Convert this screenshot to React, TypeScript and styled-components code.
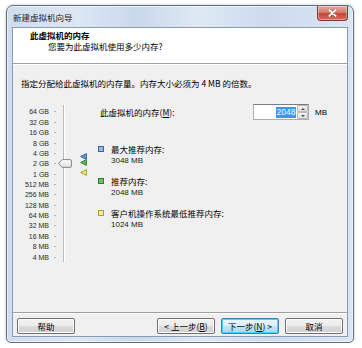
import React from "react";
import styled, { createGlobalStyle } from "styled-components";

const CJK = `"Noto Sans CJK SC", "Noto Sans", sans-serif`;
const LATIN = `"Liberation Sans", "Noto Sans CJK SC", sans-serif`;

const GlobalStyle = createGlobalStyle`
  html, body { margin: 0; padding: 0; background: #ffffff; }
  body { font-family: ${CJK}; font-size: 8.5px; color: #000; }
  * { box-sizing: border-box; }
`;

const Window = styled.div`
  position: relative;
  margin: 5px 0 0 6px;
  width: 348px;
  height: 338px;
  border: 1px solid #5e6e83;
  border-radius: 7px 7px 5px 5px;
  background: linear-gradient(
    to right,
    #cfdcec 0%,
    #dce7f4 20%,
    #c9d8ea 38%,
    #dfe9f5 55%,
    #cddbec 75%,
    #d9e5f2 100%
  );
  box-shadow: inset 0 0 0 1px rgba(255, 255, 255, 0.6), 0 0 3px rgba(0, 0, 0, 0.25);
  display: flex;
  flex-direction: column;
  padding: 0 5px 5px 5px;
`;

const TitleBar = styled.div`
  height: 21px;
  display: flex;
  align-items: center;
  padding-left: 1px;
  font-size: 8.5px;
  color: #1e1e1e;
`;

const CloseButton = styled.div`
  position: absolute;
  top: 0;
  right: 5px;
  width: 31px;
  height: 15px;
  border: 1px solid #7a3a33;
  border-top: none;
  border-radius: 0 0 4px 4px;
  background: linear-gradient(#e9a99f 0%, #d77c70 45%, #c3463a 55%, #d3715e 100%);
  box-shadow: inset 0 0 0 1px rgba(255, 255, 255, 0.35);
  display: flex;
  align-items: center;
  justify-content: center;
`;

const Client = styled.div`
  flex: 1;
  display: flex;
  flex-direction: column;
  background: #f0f0f0;
  border: 1px solid #8a9ab0;
`;

const Header = styled.div`
  height: 35px;
  background: #ffffff;
  padding: 2px 0 0 17px;
  display: flex;
  flex-direction: column;
`;

const HeaderTitle = styled.div`
  font-weight: bold;
  line-height: 11px;
  font-size: 8.5px;
`;

const HeaderSub = styled.div`
  line-height: 11px;
  padding-left: 18px;
`;

const Divider = styled.div`
  height: 2px;
  border-top: 1px solid #a0a0a0;
  border-bottom: 1px solid #ffffff;
  flex: none;
`;

const Body = styled.div`
  flex: 1;
  display: flex;
  flex-direction: column;
`;

const Sentence = styled.div`
  margin: 13px 0 0 8px;
  line-height: 11px;
`;

const Main = styled.div`
  flex: 1;
  display: flex;
  margin-top: 15px;
`;

const Slider = styled.div`
  position: relative;
  width: 85px;
  display: flex;
  padding-top: 1px;
`;

const LabelCol = styled.div`
  display: flex;
  flex-direction: column;
  margin-top: 1.8px;
`;

const ROW = 10.36;

const ScaleRow = styled.div`
  height: ${ROW}px;
  display: flex;
  align-items: center;
`;

const ScaleText = styled.span`
  width: 36px;
  text-align: right;
  font-family: ${LATIN};
  font-size: 7px;
  color: #2a2a2a;
  white-space: nowrap;
`;

const Tick = styled.span`
  width: 2px;
  height: 1px;
  margin-left: 5px;
  background: #b4b4b4;
`;

const Track = styled.div`
  width: 2px;
  height: 157px;
  margin-left: 7px;
  border-left: 1px solid #bcbcbc;
  border-right: 1px solid #ffffff;
`;

const Thumb = styled.svg`
  position: absolute;
  left: 45px;
`;

const Marker = styled.svg`
  position: absolute;
  left: 67px;
`;

const Right = styled.div`
  flex: 1;
  display: flex;
  flex-direction: column;
`;

const MemRow = styled.div`
  display: flex;
  align-items: center;
  height: 16px;
  padding-left: 2px;
`;

const MemLabel = styled.span`
  width: 153px;
  line-height: 11px;
`;

const U = styled.span`
  text-decoration: underline;
`;

const SpinBox = styled.div`
  width: 56px;
  height: 16px;
  display: flex;
  border: 1px solid #abadb3;
  border-top-color: #7a7c83;
  background: #ffffff;
`;

const SpinInput = styled.div`
  flex: 1;
  display: flex;
  align-items: center;
  justify-content: flex-end;
  padding-right: 1px;
`;

const Selected = styled.span`
  background: #3399ff;
  color: #ffffff;
  font-family: ${LATIN};
  font-size: 8.5px;
  line-height: 11px;
  padding: 0 0.5px;
`;

const SpinButtons = styled.div`
  width: 11px;
  display: flex;
  flex-direction: column;
`;

const SpinBtn = styled.div`
  flex: 1;
  display: flex;
  align-items: center;
  justify-content: center;
  background: linear-gradient(#f3f3f3, #dedede);
  border: 1px solid #b8b8b8;
  border-radius: 1px;
`;

const Unit = styled.span`
  margin-left: 6px;
  font-family: ${LATIN};
  font-size: 8px;
`;

const Legend = styled.div`
  margin-top: 23.5px;
  display: flex;
  flex-direction: column;
  gap: 10px;
`;

const LegendItem = styled.div`
  display: flex;
  align-items: flex-start;
`;

const Swatch = styled.span<{ $fill: string; $edge: string }>`
  width: 6px;
  height: 6px;
  margin-top: 2.5px;
  background: ${(p) => p.$fill};
  border: 1px solid ${(p) => p.$edge};
  flex: none;
`;

const LegendText = styled.div`
  margin-left: 7px;
  display: flex;
  flex-direction: column;
`;

const LegendLabel = styled.div`
  line-height: 11px;
`;

const LegendValue = styled.div`
  line-height: 11px;
  font-family: ${LATIN};
  font-size: 8px;
  color: #222;
`;

const Footer = styled.div`
  display: flex;
  flex-direction: column;
`;

const ButtonBar = styled.div`
  display: flex;
  padding: 4px 4px 2px 4px;
  gap: 6px;
`;

const Spacer = styled.div`
  flex: 1;
`;

const Button = styled.div<{ $default?: boolean }>`
  width: 58px;
  height: 16px;
  display: flex;
  align-items: center;
  justify-content: center;
  border-radius: 2px;
  border: 1px solid ${(p) => (p.$default ? "#3c7fb1" : "#707070")};
  background: ${(p) =>
    p.$default
      ? "linear-gradient(#eaf6fd 0%, #d9f0fc 50%, #bee6fd 50%, #a7d9f5 100%)"
      : "linear-gradient(#f2f2f2 0%, #ebebeb 50%, #dddddd 50%, #cfcfcf 100%)"};
  box-shadow: inset 0 0 0 1px ${(p) => (p.$default ? "#48d2fc" : "#fbfbfb")};
  font-size: 8.5px;
  line-height: 11px;
  white-space: nowrap;
`;

const scale = [
  "64 GB",
  "32 GB",
  "16 GB",
  "8 GB",
  "4 GB",
  "2 GB",
  "1 GB",
  "512 MB",
  "256 MB",
  "128 MB",
  "64 MB",
  "32 MB",
  "16 MB",
  "8 MB",
  "4 MB",
];

const TOP = 2.8;
const posFor = (mb: number) => TOP + Math.log2(65536 / mb) * ROW + ROW / 2;

const markers = [
  { mb: 3048, fill: "#6d97d6", edge: "#2f5a9e" },
  { mb: 2048, fill: "#5fb95a", edge: "#2a7a2a" },
  { mb: 1024, fill: "#efe777", edge: "#a09a2a" },
];

const legend = [
  { label: "最大推荐内存:", value: "3048 MB", fill: "#9ab6e2", edge: "#3e64a6" },
  { label: "推荐内存:", value: "2048 MB", fill: "#6cc067", edge: "#2e7f2e" },
  { label: "客户机操作系统最低推荐内存:", value: "1024 MB", fill: "#f3ee84", edge: "#a9a22c" },
];

export default function App() {
  const thumbY = posFor(2048);
  return (
    <>
      <GlobalStyle />
      <Window>
        <TitleBar>新建虚拟机向导</TitleBar>
        <CloseButton>
          <svg width="9" height="8" viewBox="0 0 9 8">
            <path d="M1 0.8 L8 7.2 M8 0.8 L1 7.2" stroke="#5a1a14" strokeWidth="2.6" strokeLinecap="round" opacity="0.45" />
            <path d="M1.2 1 L7.8 7 M7.8 1 L1.2 7" stroke="#ffffff" strokeWidth="1.7" strokeLinecap="round" />
          </svg>
        </CloseButton>
        <Client>
          <Header>
            <HeaderTitle>此虚拟机的内存</HeaderTitle>
            <HeaderSub>您要为此虚拟机使用多少内存?</HeaderSub>
          </Header>
          <Divider />
          <Body>
            <Sentence>指定分配给此虚拟机的内存量。内存大小必须为 4 MB 的倍数。</Sentence>
            <Main>
              <Slider>
                <LabelCol>
                  {scale.map((s) => (
                    <ScaleRow key={s}>
                      <ScaleText>{s}</ScaleText>
                      <Tick />
                    </ScaleRow>
                  ))}
                </LabelCol>
                <Track />
                <Thumb width="14" height="9" viewBox="0 0 14 9" style={{ top: thumbY - 4.5 }}>
                  <defs>
                    <linearGradient id="tg" x1="0" y1="0" x2="0" y2="1">
                      <stop offset="0" stopColor="#ffffff" />
                      <stop offset="1" stopColor="#dcdcdc" />
                    </linearGradient>
                  </defs>
                  <path d="M0.6 4.5 L4.2 0.6 H12 Q13.4 0.6 13.4 2 V7 Q13.4 8.4 12 8.4 H4.2 Z" fill="url(#tg)" stroke="#7a7a7a" strokeWidth="0.9" />
                </Thumb>
                {markers.map((m) => (
                  <Marker key={m.mb} width="7" height="7" viewBox="0 0 7 7" style={{ top: posFor(m.mb) - 5 }}>
                    <path d="M0.6 3.5 L6.4 0.6 V6.4 Z" fill={m.fill} stroke={m.edge} strokeWidth="0.9" strokeLinejoin="round" />
                  </Marker>
                ))}
              </Slider>
              <Right>
                <MemRow>
                  <MemLabel>
                    此虚拟机的内存(<U>M</U>):
                  </MemLabel>
                  <SpinBox>
                    <SpinInput>
                      <Selected>2048</Selected>
                    </SpinInput>
                    <SpinButtons>
                      <SpinBtn>
                        <svg width="4" height="2" viewBox="0 0 4 2">
                          <path d="M0 2 L2 0 L4 2 Z" fill="#4d4d4d" />
                        </svg>
                      </SpinBtn>
                      <SpinBtn>
                        <svg width="4" height="2" viewBox="0 0 4 2">
                          <path d="M0 0 L2 2 L4 0 Z" fill="#4d4d4d" />
                        </svg>
                      </SpinBtn>
                    </SpinButtons>
                  </SpinBox>
                  <Unit>MB</Unit>
                </MemRow>
                <Legend>
                  {legend.map((l) => (
                    <LegendItem key={l.value}>
                      <Swatch $fill={l.fill} $edge={l.edge} />
                      <LegendText>
                        <LegendLabel>{l.label}</LegendLabel>
                        <LegendValue>{l.value}</LegendValue>
                      </LegendText>
                    </LegendItem>
                  ))}
                </Legend>
              </Right>
            </Main>
            <Footer>
              <Divider />
              <ButtonBar>
                <Button>帮助</Button>
                <Spacer />
                <Button>
                  &lt; 上一步(<U>B</U>)
                </Button>
                <Button $default>
                  下一步(<U>N</U>) &gt;
                </Button>
                <Button>取消</Button>
              </ButtonBar>
            </Footer>
          </Body>
        </Client>
      </Window>
    </>
  );
}
